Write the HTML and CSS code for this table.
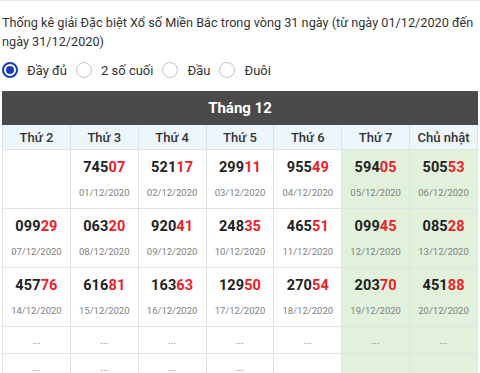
FILE: index.html
```html
<!DOCTYPE html>
<html lang="vi">
<head>
<meta charset="utf-8">
<link rel="stylesheet" href="styles.css">
</head>
<body>
<div class="wrap">
  <p class="intro">Thống kê giải Đặc biệt Xổ số Miền Bắc trong vòng 31 ngày (từ ngày 01/12/2020 đến ngày 31/12/2020)</p>
  <div class="opts">
    <label class="opt"><span class="radio on"></span>Đầy đủ</label>
    <label class="opt"><span class="radio"></span>2 số cuối</label>
    <label class="opt"><span class="radio"></span>Đầu</label>
    <label class="opt"><span class="radio"></span>Đuôi</label>
  </div>
  <table class="cal">
    <thead>
      <tr><th colspan="7" class="month">Tháng 12</th></tr>
      <tr class="days"><th>Thứ 2</th><th>Thứ 3</th><th>Thứ 4</th><th>Thứ 5</th><th>Thứ 6</th><th>Thứ 7</th><th>Chủ nhật</th></tr>
    </thead>
    <tbody>
      <tr class="res">
        <td></td>
        <td><div class="num">745<span>07</span></div><div class="date">01/12/2020</div></td>
        <td><div class="num">521<span>17</span></div><div class="date">02/12/2020</div></td>
        <td><div class="num">299<span>11</span></div><div class="date">03/12/2020</div></td>
        <td><div class="num">955<span>49</span></div><div class="date">04/12/2020</div></td>
        <td class="we"><div class="num">594<span>05</span></div><div class="date">05/12/2020</div></td>
        <td class="we"><div class="num">505<span>53</span></div><div class="date">06/12/2020</div></td>
      </tr>
      <tr class="res">
        <td><div class="num">099<span>29</span></div><div class="date">07/12/2020</div></td>
        <td><div class="num">063<span>20</span></div><div class="date">08/12/2020</div></td>
        <td><div class="num">920<span>41</span></div><div class="date">09/12/2020</div></td>
        <td><div class="num">248<span>35</span></div><div class="date">10/12/2020</div></td>
        <td><div class="num">465<span>51</span></div><div class="date">11/12/2020</div></td>
        <td class="we"><div class="num">099<span>45</span></div><div class="date">12/12/2020</div></td>
        <td class="we"><div class="num">085<span>28</span></div><div class="date">13/12/2020</div></td>
      </tr>
      <tr class="res">
        <td><div class="num">457<span>76</span></div><div class="date">14/12/2020</div></td>
        <td><div class="num">616<span>81</span></div><div class="date">15/12/2020</div></td>
        <td><div class="num">163<span>63</span></div><div class="date">16/12/2020</div></td>
        <td><div class="num">129<span>50</span></div><div class="date">17/12/2020</div></td>
        <td><div class="num">270<span>54</span></div><div class="date">18/12/2020</div></td>
        <td class="we"><div class="num">203<span>70</span></div><div class="date">19/12/2020</div></td>
        <td class="we"><div class="num">451<span>88</span></div><div class="date">20/12/2020</div></td>
      </tr>
      <tr class="dots">
        <td>...</td><td>...</td><td>...</td><td>...</td><td>...</td><td class="we">...</td><td class="we">...</td>
      </tr>
      <tr class="dots last">
        <td>...</td><td>...</td><td>...</td><td>...</td><td></td><td class="we"></td><td class="we"></td>
      </tr>
    </tbody>
  </table>
</div>
</body>
</html>
```
FILE: styles.css
```css
html, body {
  margin: 0;
  padding: 0;
  background: #fff;
}
.wrap {
  border-top: 1px solid #e6e6e6;
  padding: 0 2px;
}
.intro {
  margin: 12px 0 0;
  font-family: Roboto, "Liberation Sans", sans-serif;
  font-size: 12.7px;
  line-height: 19px;
  color: #333;
}
.opts {
  display: flex;
  align-items: center;
  margin-top: 10px;
  height: 18px;
  font-family: Roboto, "Liberation Sans", sans-serif;
  font-size: 13px;
  color: #333;
}
.opt {
  display: flex;
  align-items: center;
  margin-right: 9px;
}
.radio {
  width: 14px;
  height: 14px;
  border: 1px solid #c4c4c4;
  border-radius: 50%;
  margin-right: 9px;
  box-sizing: content-box;
  position: relative;
}
.radio.on {
  border: 2px solid #1a3bbf;
  width: 12px;
  height: 12px;
}
.radio.on::after {
  content: "";
  position: absolute;
  left: 2px;
  top: 2px;
  width: 8px;
  height: 8px;
  border-radius: 50%;
  background: #1a3bbf;
}
.cal {
  margin-top: 12px;
  width: 476px;
  border-collapse: collapse;
  table-layout: fixed;
  font-family: Roboto, "Liberation Sans", sans-serif;
}
.cal th.month {
  background: #4a4a4a;
  color: #fff;
  font-size: 15px;
  font-weight: bold;
  height: 32px;
  padding: 0;
  border: 1px solid #4a4a4a;
}
.days th {
  background: #eef6fd;
  color: #333;
  font-size: 13px;
  font-weight: 500;
  height: 24px;
  padding: 0;
  border: 1px solid #e2e2e2;
}
.cal td {
  border: 1px solid #e2e2e2;
  text-align: center;
  padding: 0;
  vertical-align: top;
}
.cal td.we {
  background: #e1f1dc;
}
.res td {
  height: 58px;
}
.num {
  margin-top: 9px;
  font-size: 14.5px;
  font-weight: bold;
  color: #222;
  line-height: 18px;
  letter-spacing: 0.1px;
}
.num span {
  color: #ee1c25;
}
.date {
  margin-top: 9px;
  font-size: 9.5px;
  color: #808080;
  line-height: 14px;
}
.dots td {
  height: 26px;
  vertical-align: middle;
  font-size: 10px;
  color: #888;
}
```
